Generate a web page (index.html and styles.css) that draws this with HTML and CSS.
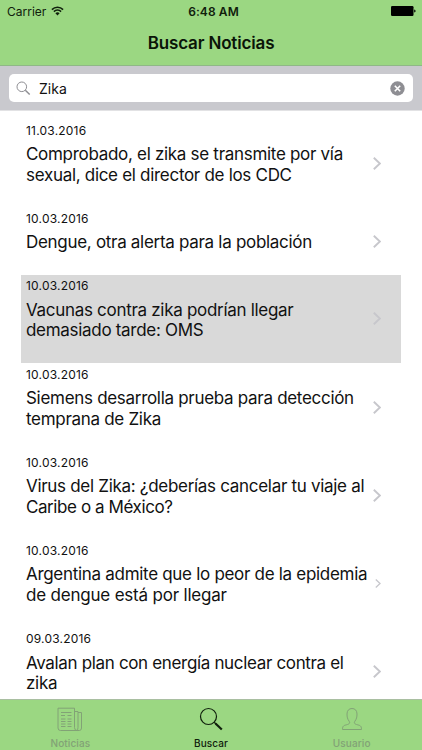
FILE: index.html
```
<!DOCTYPE html>
<html lang="es">
<head>
<meta charset="utf-8">
<title>Buscar Noticias</title>
<link rel="stylesheet" href="styles.css">
</head>
<body>
<svg class="defs" width="0" height="0"><symbol id="chev" viewBox="0 0 8 13"><path d="M.8.8 6.9 6.5.8 12.2" fill="none" stroke="currentColor" stroke-width="1.9"/></symbol></svg>
<header class="top">
  <div class="status">
    <div class="carrier"><span>Carrier</span>
      <svg width="13" height="10" viewBox="0 0 13 10"><path d="M.9 3.6a8 8 0 0 1 11.2 0M2.900 5.600a5.200 5.200 0 0 1 7.200 0" fill="none" stroke="#10200c" stroke-width="1.600"/><path d="M6.500 9.500 4.400 7.200a3 3 0 0 1 4.200 0z" fill="#10200c"/></svg>
    </div>
    <div class="clock">6:48 AM</div>
    <div class="battery"><svg width="25" height="10" viewBox="0 0 25 10"><rect width="22.500" height="10" rx="1.200"/><path d="M23.200 3.400q1.400.3 1.400 1.600t-1.400 1.600z"/></svg></div>
  </div>
  <h1>Buscar Noticias</h1>
</header>
<div class="searchbar">
  <div class="field">
    <svg width="15" height="15" viewBox="0 0 15 15" fill="none" stroke="#8e8e93"><circle cx="5.800" cy="5.800" r="4.800" stroke-width="1"/><path d="m9.300 9.300 4.400 4.200" stroke-width="1.500"/></svg>
    <span>Zika</span>
    <svg class="clear" width="15" height="15" viewBox="0 0 15 15"><circle cx="7.500" cy="7.500" r="7.200" fill="#8e8e93"/><path d="m4.800 4.800 5.400 5.400m0-5.400-5.400 5.400" stroke="#fff" stroke-width="1.600"/></svg>
  </div>
</div>
<main class="list">
  <article class="row"><div class="text"><time>11.03.2016</time><p><span>Comprobado, el zika se transmite por vía</span><span>sexual, dice el director de los CDC</span></p></div><svg class="chev"><use href="#chev"/></svg></article>
  <article class="row short"><div class="text"><time>10.03.2016</time><p><span>Dengue, otra alerta para la población</span></p></div><svg class="chev"><use href="#chev"/></svg></article>
  <article class="row selected"><div class="text"><time>10.03.2016</time><p><span>Vacunas contra zika podrían llegar</span><span>demasiado tarde: OMS</span></p></div><svg class="chev"><use href="#chev"/></svg></article>
  <article class="row"><div class="text"><time>10.03.2016</time><p><span>Siemens desarrolla prueba para detección</span><span>temprana de Zika</span></p></div><svg class="chev"><use href="#chev"/></svg></article>
  <article class="row"><div class="text"><time>10.03.2016</time><p><span>Virus del Zika: ¿deberías cancelar tu viaje al</span><span class="tighter">Caribe o a México?</span></p></div><svg class="chev"><use href="#chev"/></svg></article>
  <article class="row"><div class="text"><time>10.03.2016</time><p><span>Argentina admite que lo peor de la epidemia</span><span class="looser">de dengue está por llegar</span></p></div><svg class="chev small"><use href="#chev"/></svg></article>
  <article class="row"><div class="text"><time>09.03.2016</time><p><span class="tight">Avalan plan con energía nuclear contra el</span><span>zika</span></p></div><svg class="chev"><use href="#chev"/></svg></article>
</main>
<nav class="tabs">
  <div class="tab"><svg width="26" height="26" viewBox="0 0 26 26" fill="none" stroke="currentColor"><path d="M1 1.200h16.500v19.300q0 3 2.600 3H3.500Q1 23.500 1 21zM17.500 4.500H21v16M21 5.500h3.500v15.500q0 2.500-2.200 2.500h-2.500M21 20.500q0 3-1.500 3"/><path d="M4 5.500h10.500M4 8.500h4M10.500 8.500h4M4 12h4.500M10.500 12h4M4 14.500h4.500M10.500 14.500h4M4 17h4.500M10.500 17h4M4 19.500h4.500M10.500 19.500h4"/></svg><span>Noticias</span></div>
  <div class="tab active"><svg width="26" height="26" viewBox="0 0 26 26" fill="none" stroke="currentColor"><circle cx="10.500" cy="9.500" r="8" stroke-width="1.200"/><path d="m16.200 15.300 1.800 1.700" stroke-width="1.400"/><path d="m17.500 16.500 6.300 6" stroke-width="2.200"/></svg><span>Buscar</span></div>
  <div class="tab"><svg width="26" height="26" viewBox="0 0 26 26" fill="none" stroke="currentColor"><path d="M3.500 22.500c0-4 1.500-4 5-5 2.500-.8 2.500-2 1.500-3.500C8.500 12 8 10 8 7c0-3.500 2-5.500 5-5.500s5 2 5 5.500c0 3-.5 5-2 7-1 1.500-1 2.700 1.500 3.500 3.500 1 5 1 5 5z"/></svg><span>Usuario</span></div>
</nav>
</body>
</html>
```
FILE: styles.css
```
* { box-sizing: border-box; }
html, body { margin: 0; height: 100%; }
body { width: 422px; height: 750px; overflow: hidden; display: flex; flex-direction: column; background: #fff; color: #111; font-family: Inter, "Liberation Sans", sans-serif; }
svg { display: block; flex: none; }
.defs { position: absolute; }
.top { flex: none; height: 66px; background: #9bd782; border-bottom: 1px solid #8fb886; }
.status { height: 22px; display: grid; grid-template-columns: 1fr auto 1fr; align-items: center; padding: 0 6px 0 7px; font-size: 12px; color: #10200c; }
.carrier { display: flex; align-items: center; gap: 5px; letter-spacing: 0; }
.clock { font-weight: 600; letter-spacing: .1px; padding-left: 4px; }
.battery { display: flex; justify-content: flex-end; }
h1 { margin: 0; height: 43px; line-height: 43px; text-align: center; font-size: 17px; font-weight: 600; letter-spacing: -.15px; color: #0a1408; }
.searchbar { flex: none; height: 45px; padding: 8px 9px 0; background: #c9c9ce; border-bottom: 1px solid #e2e2e4; }
.field { height: 28px; border-radius: 5px; background: #fff; display: flex; align-items: center; padding: 0 8px 0 7px; font-size: 14px; }
.field span { margin-left: 8px; }
.clear { margin-left: auto; }
.list { flex: 1; min-height: 0; overflow: hidden; padding: 8px 21px 0; }
.row { height: 88.2px; padding: 0 20px 0 5px; display: flex; align-items: center; justify-content: space-between; }
.row.short { height: 67.7px; }
.row.selected { background: #d9d9d9; }
.text { align-self: flex-start; flex: none; padding-top: 3.500px; }
time { display: block; font-size: 12px; line-height: 16px; letter-spacing: .2px; }
p { margin: 5.500px 0 0; font-size: 17px; line-height: 20.600px; letter-spacing: -.3px; white-space: nowrap; }
p span { display: block; width: max-content; }
.tight { letter-spacing: -.34px; }
.tighter { letter-spacing: -.42px; }
.looser { letter-spacing: -.2px; }
.chev { width: 8px; height: 13px; color: #c7c7cc; }
.chev.small { width: 6px; height: 9px; }
.tabs { flex: none; height: 51px; background: #9bd782; border-top: 1px solid #a9bfa1; display: grid; grid-template-columns: repeat(3, 1fr); }
.tab { display: flex; flex-direction: column; align-items: center; padding-top: 7px; font-size: 10px; line-height: 14px; font-weight: 500; color: #82a276; }
.tab span { margin-top: 3px; letter-spacing: .1px; }
.tab.active { color: #10200c; }
```
